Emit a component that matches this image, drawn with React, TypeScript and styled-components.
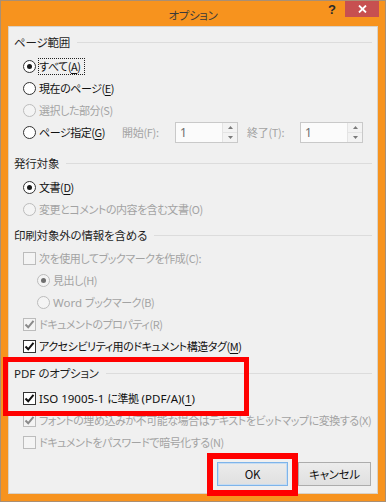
import React from "react";
import styled, { createGlobalStyle, css } from "styled-components";

const Global = createGlobalStyle`
  html, body { margin: 0; padding: 0; background: #ffffff; }
  body {
    font-family: "Noto Sans CJK JP", "Noto Sans", sans-serif;
    font-size: 11px;
    font-feature-settings: "palt";
    -webkit-font-smoothing: antialiased;
  }
  * { box-sizing: border-box; }
`;

const Window = styled.div`
  position: relative;
  width: 386px;
  height: 502px;
  background: #f7931e;
  border: 1px solid #a98f74;
  display: flex;
  flex-direction: column;
`;

const TitleBar = styled.div`
  height: 25px;
  display: grid;
  grid-template-columns: 1fr auto 1fr;
  align-items: start;
`;

const Title = styled.div`
  grid-column: 2;
  padding-top: 6px;
  font-size: 11.5px;
  line-height: 16px;
  letter-spacing: -0.3px;
  color: #3a3a3a;
`;

const Controls = styled.div`
  grid-column: 3;
  justify-self: end;
  display: flex;
  align-items: flex-start;
  margin-right: 6px;
`;

const Help = styled.div`
  width: 20px;
  padding-top: 1px;
  text-align: center;
  font-family: "Liberation Sans", sans-serif;
  font-weight: bold;
  font-size: 13px;
  line-height: 16px;
  color: #2b2b2b;
`;

const Close = styled.div`
  width: 34px;
  height: 16px;
  margin-left: 3px;
  background: #c75050;
  color: #ffffff;
  display: flex;
  align-items: center;
  justify-content: center;
`;

const Client = styled.div`
  flex: 1;
  margin: 0 7px 7px 7px;
  background: #f0f0f0;
  border: 1px solid #d9d2c8;
  padding: 6px 5px 7px 5px;
  display: flex;
  flex-direction: column;
`;

const Section = styled.section<{ $gap?: number }>`
  display: flex;
  flex-direction: column;
  margin-bottom: ${(p) => p.$gap ?? 0}px;
`;

const Header = styled.div<{ $mb?: number }>`
  height: 18px;
  display: flex;
  align-items: center;
  gap: 7px;
  color: #1e1e1e;
  font-size: 11.5px;
  letter-spacing: -0.2px;
  margin-bottom: ${(p) => p.$mb ?? 4}px;
  &::after {
    content: "";
    flex: 1;
    height: 1px;
    background: #dcdcdc;
  }
`;

const Latin = styled.span`
  font-family: "Noto Sans", "Noto Sans CJK JP", sans-serif;
  font-size: 11.5px;
  letter-spacing: 0;
  white-space: pre;
`;

const Row = styled.div<{ $indent?: number; $h?: number }>`
  height: ${(p) => p.$h ?? 22}px;
  display: flex;
  align-items: center;
  padding-left: ${(p) => p.$indent ?? 9}px;
  gap: 3px;
`;

const Label = styled.span<{ $disabled?: boolean; $focus?: boolean; $w?: number }>`
  font-size: 11px;
  line-height: 15px;
  letter-spacing: -0.45px;
  color: ${(p) => (p.$disabled ? "#a3a3a3" : "#111111")};
  white-space: nowrap;
  ${(p) => p.$w && css`width: ${p.$w}px; flex: none;`}
  ${(p) =>
    p.$focus &&
    css`
      outline: 1px dotted #222;
      outline-offset: 0px;
      padding: 0 3px 0 0;
    `}
  u {
    text-decoration: underline;
    text-underline-offset: 2px;
  }
`;

const RadioCircle = styled.span<{ $disabled?: boolean; $checked?: boolean }>`
  width: 13px;
  height: 13px;
  flex: none;
  border-radius: 50%;
  border: 1px solid ${(p) => (p.$disabled ? "#bcbcbc" : "#333333")};
  background: ${(p) => (p.$disabled ? "#f4f4f4" : "#ffffff")};
  display: flex;
  align-items: center;
  justify-content: center;
  &::after {
    content: "";
    display: ${(p) => (p.$checked ? "block" : "none")};
    width: 5px;
    height: 5px;
    border-radius: 50%;
    background: ${(p) => (p.$disabled ? "#6f6f6f" : "#1a1a1a")};
  }
`;

const Box = styled.span<{ $disabled?: boolean }>`
  width: 13px;
  height: 13px;
  flex: none;
  border: 1px solid ${(p) => (p.$disabled ? "#bcbcbc" : "#333333")};
  background: ${(p) => (p.$disabled ? "#f4f4f4" : "#ffffff")};
  display: flex;
  align-items: center;
  justify-content: center;
`;

const FieldLabel = styled.span<{ $w: number; $ml?: number }>`
  width: ${(p) => p.$w}px;
  margin-left: ${(p) => p.$ml ?? 0}px;
  flex: none;
  color: #a3a3a3;
  font-size: 11px;
  letter-spacing: -0.3px;
  line-height: 15px;
  white-space: nowrap;
`;

const Spin = styled.div`
  width: 63px;
  height: 21px;
  flex: none;
  border: 1px solid #c9c9c9;
  background: #fbfbfb;
  display: flex;
`;

const SpinValue = styled.span`
  flex: 1;
  padding-left: 4px;
  color: #6d6d6d;
  font-family: "Noto Sans", sans-serif;
  font-size: 12px;
  line-height: 19px;
`;

const SpinButtons = styled.div`
  width: 15px;
  display: flex;
  flex-direction: column;
  border-left: 1px solid #e4e4e4;
`;

const SpinHalf = styled.div`
  flex: 1;
  display: flex;
  align-items: center;
  justify-content: center;
  background: #f3f3f3;
  & + & { border-top: 1px solid #e4e4e4; }
`;

const Buttons = styled.div`
  margin-top: auto;
  display: flex;
  justify-content: flex-end;
  gap: 10px;
  padding-right: 1px;
`;

const Button = styled.button<{ $default?: boolean; $w: number }>`
  width: ${(p) => p.$w}px;
  height: 24px;
  font-family: inherit;
  font-feature-settings: "palt";
  font-size: 11.5px;
  letter-spacing: -0.3px;
  color: #111;
  border: 1px solid ${(p) => (p.$default ? "#7eb4ea" : "#acacac")};
  background: linear-gradient(#ececec, #e0e0e0);
  ${(p) =>
    p.$default &&
    css`
      box-shadow: inset 0 0 0 1px #c6dcf2;
    `}
  padding: 0;
`;

const Mark = styled.div<{ $l: number; $t: number; $w: number; $h: number; $b: number }>`
  position: absolute;
  left: ${(p) => p.$l}px;
  top: ${(p) => p.$t}px;
  width: ${(p) => p.$w}px;
  height: ${(p) => p.$h}px;
  border: ${(p) => p.$b}px solid #ff0000;
  pointer-events: none;
`;

const Check = ({ disabled }: { disabled?: boolean }) => (
  <svg width="11" height="11" viewBox="0 0 11 11">
    <path
      d="M1.5 5.5 L4.2 8.3 L9.5 1.8"
      fill="none"
      stroke={disabled ? "#8a8a8a" : "#111"}
      strokeWidth="2"
    />
  </svg>
);

const Radio = ({
  checked,
  disabled,
  indent,
  focus,
  children,
}: {
  checked?: boolean;
  disabled?: boolean;
  indent?: number;
  focus?: boolean;
  children: React.ReactNode;
}) => (
  <Row $indent={indent}>
    <RadioCircle $checked={checked} $disabled={disabled} />
    <Label $disabled={disabled} $focus={focus}>
      {children}
    </Label>
  </Row>
);

const CheckRow = ({
  checked,
  disabled,
  indent,
  children,
}: {
  checked?: boolean;
  disabled?: boolean;
  indent?: number;
  children: React.ReactNode;
}) => (
  <Row $indent={indent}>
    <Box $disabled={disabled}>{checked && <Check disabled={disabled} />}</Box>
    <Label $disabled={disabled}>{children}</Label>
  </Row>
);

const SpinBox = () => (
  <Spin>
    <SpinValue>1</SpinValue>
    <SpinButtons>
      <SpinHalf>
        <svg width="5" height="3" viewBox="0 0 5 3">
          <path d="M0 3 L2.5 0 L5 3 Z" fill="#7a7a7a" />
        </svg>
      </SpinHalf>
      <SpinHalf>
        <svg width="5" height="3" viewBox="0 0 5 3">
          <path d="M0 0 L2.5 3 L5 0 Z" fill="#7a7a7a" />
        </svg>
      </SpinHalf>
    </SpinButtons>
  </Spin>
);

export default function App() {
  return (
    <>
      <Global />
      <Window>
        <TitleBar>
          <Title>オプション</Title>
          <Controls>
            <Help>?</Help>
            <Close>
              <svg width="9" height="8" viewBox="0 0 9 8">
                <path d="M1 0.5 L8 7.5 M8 0.5 L1 7.5" stroke="#fff" strokeWidth="1.8" />
              </svg>
            </Close>
          </Controls>
        </TitleBar>
        <Client>
          <Section $gap={11}>
            <Header>ページ範囲</Header>
            <Radio checked focus>
              すべて(<u>A</u>)
            </Radio>
            <Radio>
              現在のページ(<u>E</u>)
            </Radio>
            <Radio disabled>選択した部分(S)</Radio>
            <Row>
              <RadioCircle />
              <Label $w={80}>
                ページ指定(<u>G</u>)
              </Label>
              <FieldLabel $w={50}>開始(F):</FieldLabel>
              <SpinBox />
              <FieldLabel $w={50} $ml={6}>
                終了(T):
              </FieldLabel>
              <SpinBox />
            </Row>
          </Section>
          <Section $gap={6}>
            <Header>発行対象</Header>
            <Radio checked>
              文書(<u>D</u>)
            </Radio>
            <Radio disabled>変更とコメントの内容を含む文書(O)</Radio>
          </Section>
          <Section $gap={7}>
            <Header $mb={3}>印刷対象外の情報を含める</Header>
            <CheckRow disabled>次を使用してブックマークを作成(C):</CheckRow>
            <Radio disabled checked indent={23}>
              見出し(H)
            </Radio>
            <Radio disabled indent={23}>
              <Latin>{"Word "}</Latin>ブックマーク(B)
            </Radio>
            <CheckRow disabled checked>
              ドキュメントのプロパティ(R)
            </CheckRow>
            <CheckRow checked>
              アクセシビリティ用のドキュメント構造タグ(<u>M</u>)
            </CheckRow>
          </Section>
          <Section>
            <Header $mb={5}>
              <span>
                <Latin>{"PDF "}</Latin>のオプション
              </span>
            </Header>
            <CheckRow checked>
              <Latin>{"ISO 19005-1 "}</Latin>に準拠
              <Latin>
                {" (PDF/A)("}
                <u>1</u>)
              </Latin>
            </CheckRow>
            <CheckRow disabled checked>
              フォントの埋め込みが不可能な場合はテキストをビットマップに変換する(X)
            </CheckRow>
            <CheckRow disabled>ドキュメントをパスワードで暗号化する(N)</CheckRow>
          </Section>
          <Buttons>
            <Button $default $w={71}>
              OK
            </Button>
            <Button $w={73}>キャンセル</Button>
          </Buttons>
        </Client>
        <Mark $l={2} $t={356} $w={246} $h={59} $b={5} />
        <Mark $l={206} $t={452} $w={91} $h={43} $b={6} />
      </Window>
    </>
  );
}
